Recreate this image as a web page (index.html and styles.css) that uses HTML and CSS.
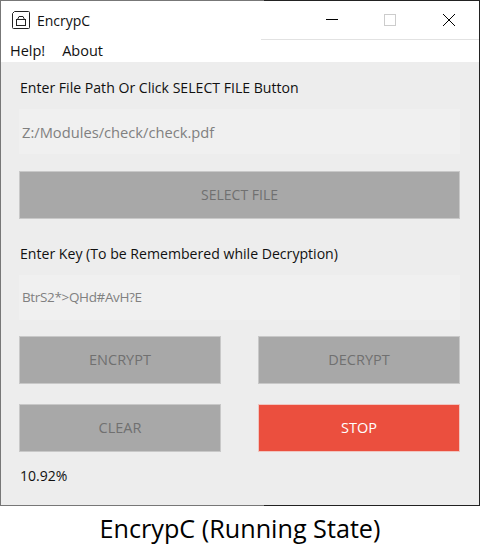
FILE: index.html
```html
<!DOCTYPE html>
<html lang="en">
  <head>
    <meta charset="UTF-8" />
    <meta name="viewport" content="width=device-width, initial-scale=1.0" />
    <title>EncrypC</title>
    <link rel="stylesheet" href="styles.css">
  </head>
  <body>
    <div class="window">
      <div class="titlebar">
        <svg class="app-icon" width="18" height="18" viewBox="0 0 18 18" fill="none" stroke="#222" stroke-width="1">
          <path d="M2.5 0.5H16.5Q17.5 0.5 17.5 1.5V16.5Q17.5 17.5 16.5 17.5H1.5Q0.5 17.5 0.5 16.5V2.5Z" />
          <rect x="4.5" y="8.5" width="9" height="6" />
          <path d="M5.5 8.5L7 5.5H11L12.5 8.5" />
        </svg>
        <span class="app-name">EncrypC</span>
        <div class="window-controls">
          <svg class="ctl-min" width="14" height="14" viewBox="0 0 14 14" stroke="#000" fill="none"><path d="M1 6.5H13" /></svg>
          <svg width="14" height="14" viewBox="0 0 14 14" stroke="#ccc" fill="none"><rect x="1.5" y="1.5" width="11" height="11" /></svg>
          <svg width="14" height="14" viewBox="0 0 14 14" stroke="#000" fill="none"><path d="M1 1L13 13M13 1L1 13" /></svg>
        </div>
      </div>
      <div class="menubar">
        <span>Help!</span>
        <span>About</span>
      </div>
      <div class="content">
        <label class="field-label">Enter File Path Or Click SELECT FILE Button</label>
        <div class="text-input path-input">Z:/Modules/check/check.pdf</div>
        <button class="btn btn-wide" type="button">SELECT FILE</button>
        <label class="field-label key-label">Enter Key (To be Remembered while Decryption)</label>
        <div class="text-input key-input">BtrS2*&gt;QHd#AvH?E</div>
        <div class="btn-grid">
          <button class="btn" type="button">ENCRYPT</button>
          <button class="btn" type="button">DECRYPT</button>
          <button class="btn" type="button">CLEAR</button>
          <button class="btn btn-stop" type="button">STOP</button>
        </div>
        <div class="status">10.92%</div>
      </div>
    </div>
    <div class="caption">EncrypC (Running State)</div>
  </body>
</html>
```

FILE: styles.css
```css
* {
  box-sizing: border-box;
}
body {
  margin: 0;
  background-color: #fff;
  font-family: "Open Sans", "Noto Sans", sans-serif;
  color: #111;
}
.window {
  height: 506px;
  border: 1px solid #555;
  border-image: linear-gradient(90deg, #777 55%, #222 55%) 1;
  display: flex;
  flex-direction: column;
}
.titlebar {
  height: 38px;
  display: flex;
  align-items: center;
  padding-left: 11px;
  flex-shrink: 0;
}
.app-icon {
  margin-right: 7px;
}
.app-name {
  font-size: 14px;
}
.window-controls {
  margin-left: auto;
  display: flex;
  gap: 45px;
  padding-right: 23px;
}
.ctl-min {
  margin-right: -1px;
}
.menubar {
  height: 23px;
  display: flex;
  align-items: center;
  gap: 17px;
  padding-left: 9px;
  font-size: 14.5px;
  flex-shrink: 0;
  position: relative;
  background-color: #fff;
}
.menubar::before {
  content: "";
  position: absolute;
  left: 260px;
  right: 0;
  top: 0;
  border-top: 1px solid #e2e2e2;
}
.content {
  flex: 1;
  background-color: #ededed;
  padding: 16px 19px 0 18px;
  display: flex;
  flex-direction: column;
}
.field-label {
  font-size: 14.1px;
  line-height: 20px;
  padding-left: 1px;
}
.key-label {
  margin-top: 25px;
}
.text-input {
  height: 45px;
  margin-top: 11px;
  background-color: #f0f0f0;
  color: #808080;
  padding-left: 3px;
}
.path-input {
  margin-bottom: 17px;
  font-size: 14.7px;
  line-height: 47px;
}
.key-input {
  margin-bottom: 16px;
  font-size: 13.5px;
  letter-spacing: -0.35px;
  line-height: 45px;
}
.btn {
  height: 48px;
  border: 1px solid #c8c8c8;
  background-color: #a8a8a8;
  color: #707070;
  font-family: inherit;
  font-size: 14.5px;
  padding: 0 0 2px;
}
.btn-wide {
  width: 100%;
  font-size: 14px;
}
.btn-grid {
  display: grid;
  grid-template-columns: 202px 202px;
  justify-content: space-between;
  row-gap: 20px;
}
.btn-stop {
  background-color: #eb4f3e;
  border-color: #f0c5c0;
  color: #fff;
}
.status {
  margin-top: 14px;
  padding-left: 1px;
  font-size: 14px;
  line-height: 20px;
}
.caption {
  text-align: center;
  font-size: 25.2px;
  line-height: 45px;
  color: #000;
}
```
